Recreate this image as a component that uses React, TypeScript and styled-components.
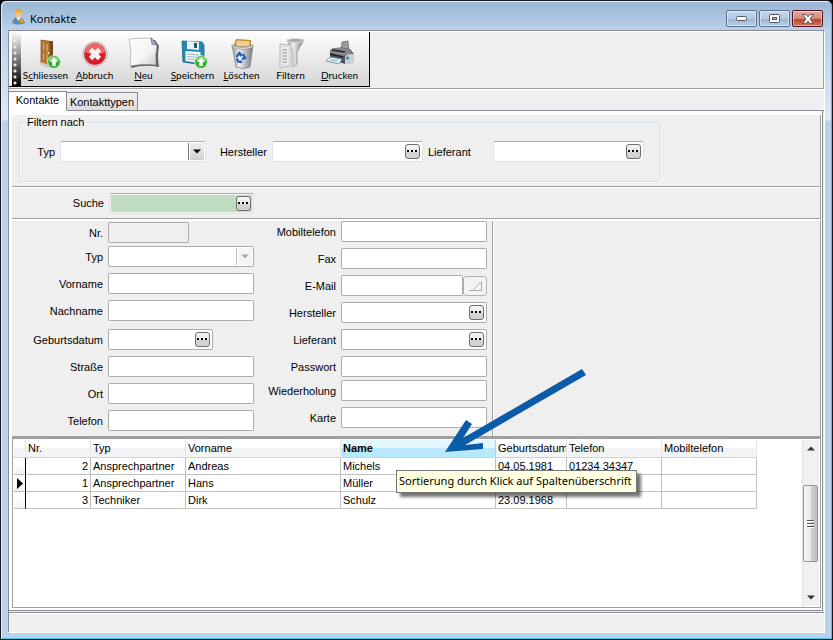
import React from "react";
import styled, { createGlobalStyle, css } from "styled-components";

const Global = createGlobalStyle`
  *, *::before, *::after { box-sizing: border-box; }
  body { margin: 0; background: #000; font: 11px/14px "Liberation Sans", Arial, sans-serif; color: #000; }
  input, select, button { font: inherit; color: inherit; margin: 0; padding: 0; border-radius: 0; outline: none; }
`;

const line = "#a0a0a0";
const face = "#efefef";
const ui = `"Noto Sans", "Open Sans", sans-serif`;

const Window = styled.div`
  position: relative;
  display: flex;
  flex-direction: column;
  min-height: 100vh;
  padding: 1px 7px 6px 7px;
  border: 1px solid #16161c;
  border-bottom-color: #000;
  border-radius: 6px 6px 0 0;
  background: linear-gradient(#9ab4d2 0, #b9d1ea 29px, #dfe9f6 119px, #b9d1ea 120px);
  box-shadow: inset 1px 1px 0 #e6eff8, inset -1px -1px 0 #2fd0e8;
`;

const TitleBar = styled.header`
  display: flex;
  align-items: center;
  height: 28px;
  padding: 0 2px 0 4px;
  gap: 5px;
`;

const Title = styled.h1`
  flex: 1;
  margin: 0;
  padding-top: 5px;
  font: 400 11px/16px ${ui};
`;

const Captions = styled.div`
  display: flex;
  gap: 2px;
  padding-top: 5px;
`;

const CaptionButton = styled.button<{ $danger?: boolean }>`
  display: grid;
  place-items: center;
  width: 31px;
  height: 17px;
  border: 1px solid ${(p) => (p.$danger ? "#4c1420" : "#5c7291")};
  border-radius: 2px;
  background: ${(p) =>
    p.$danger
      ? "linear-gradient(#e5aa9f 0, #d68677 50%, #b8402a 51%, #d0735f 100%)"
      : "linear-gradient(#c5d7ea 0, #b4c9e0 50%, #98b3d0 51%, #b9d0e8 100%)"};
  box-shadow: inset 0 0 0 1px rgba(255, 255, 255, 0.45);
`;

const Client = styled.div`
  flex: 1;
  display: flex;
  flex-direction: column;
  border: 1px solid #8b8b96;
  border-right-color: #fff;
  border-bottom-color: #fff;
  background: ${face};
`;

const ToolArea = styled.div`
  display: flex;
  height: 58px;
  padding-top: 1px;
  border-right: 1px solid ${line};
  border-bottom: 1px solid ${line};
  box-shadow: inset 0 1px 0 #fff, 0 1px 0 #fff;
`;

const Toolbar = styled.div`
  display: flex;
  height: 55px;
  border-right: 1px solid #000;
  border-bottom: 1px solid #000;
  background: linear-gradient(#fefefe, #d6d6d6);
  padding-right: 5px;
`;

const Grip = styled.div`
  width: 12px;
  border-left: 3px solid #f8f8f8;
  background:
    radial-gradient(circle at 3px 3px, #e8e8e8 1px, transparent 2px) 0 0 / 9px 6px repeat-y,
    linear-gradient(#fff, #888 45%, #000);
`;

const ToolButton = styled.button`
  display: flex;
  flex-direction: column;
  align-items: center;
  width: 49px;
  padding-top: 5px;
  border: 0;
  background: none;
  font: 10px/13px Lato, sans-serif;
  white-space: nowrap;
  svg { display: block; }
`;

const Tabs = styled.div`
  display: flex;
  align-items: flex-end;
  height: 22px;
  padding-top: 2px;
  box-shadow: inset 0 -1px 0 #8b8b96;
`;

const Tab = styled.button<{ $active?: boolean }>`
  height: ${(p) => (p.$active ? 20 : 19)}px;
  width: ${(p) => (p.$active ? 58 : 71)}px;
  padding-bottom: ${(p) => (p.$active ? 2 : 0)}px;
  border: 1px solid #8b8b96;
  border-bottom-color: ${(p) => (p.$active ? "#fff" : "#8b8b96")};
  border-left: 0;
  background: ${(p) => (p.$active ? "#fff" : "linear-gradient(#f2f2f2, #dcdcdc)")};
  font: 11px/14px "Liberation Sans", Arial, sans-serif;
`;

const Page = styled.div`
  flex: 1;
  display: flex;
  flex-direction: column;
  margin-right: 1px;
  padding: 4px 1px 2px 3px;
  border-right: 1px solid #8b8b96;
  border-bottom: 1px solid #8b8b96;
  background: #fff;
`;

const Section = styled.section`
  border-right: 1px solid ${line};
  border-bottom: 1px solid ${line};
  background: ${face};
`;

const FilterSection = styled(Section)`
  padding: 0 7px 4px;
`;

const FilterBox = styled.fieldset`
  display: flex;
  align-items: center;
  width: 642px;
  max-width: 100%;
  height: 67px;
  margin: 0;
  padding: 0 0 7px 17px;
  border: 1px solid #d3dfea;
  border-radius: 3px;
  box-shadow: inset 1px 0 0 #fff, 1px 1px 0 #fff;
  legend { margin-left: -12px; padding: 0 2px; }
`;

const SearchSection = styled(Section)`
  display: flex;
  align-items: center;
  gap: 5px;
  height: 32px;
  padding-left: 1px;
  border-top: 1px solid #fff;
`;

const FormSection = styled(Section)`
  display: flex;
  border-top: 2px solid #fff;
  border-bottom: 3px solid ${line};
`;

const Column = styled.div<{ $width: number; $top: number }>`
  width: ${(p) => p.$width}px;
  padding: ${(p) => p.$top}px 0 5px;
`;

const Detail = styled.div`
  flex: 1;
  border-left: 1px solid ${line};
  box-shadow: inset 1px 0 0 #fff;
`;

const Row = styled.div<{ $gap?: number }>`
  display: flex;
  align-items: center;
  gap: 5px;
  margin-top: ${(p) => p.$gap ?? 6}px;
`;

const Label = styled.label<{ $width: number; $align?: "left" | "right" }>`
  width: ${(p) => p.$width}px;
  text-align: ${(p) => p.$align ?? "right"};
  white-space: nowrap;
`;

type BoxProps = { $width: number; $soft?: boolean; $tone?: string };

const frame = css<BoxProps>`
  width: ${(p) => p.$width}px;
  height: 21px;
  border: 1px solid ${(p) => (p.$soft ? "#e2e3ea" : "#adadad")};
  border-top-color: #abadb3;
  border-radius: 2px;
  background: ${(p) => p.$tone ?? "#fff"};
`;

const TextBox = styled.input<BoxProps>`
  ${frame}
  padding: 0 3px;
`;

const FieldBox = styled.div<BoxProps>`
  ${frame}
  position: relative;
  display: flex;
  align-items: center;
  padding-right: 2px;
  ${(p) => p.$tone && "box-shadow: inset 0 0 0 1px #f4f4f4;"}
  input { flex: 1; min-width: 0; height: 17px; border: 0; background: transparent; padding: 0 3px; }
  select { width: 100%; height: 19px; border: 0; background: transparent; appearance: none; padding: 0 20px 0 3px; opacity: 1; }
`;

const DropMark = styled.span<{ $muted?: boolean }>`
  position: absolute;
  top: 1px;
  right: 1px;
  display: grid;
  place-items: center;
  width: 16px;
  height: 17px;
  border-left: 1px solid ${(p) => (p.$muted ? "#b8b8b8" : "#777")};
  background: ${(p) => (p.$muted ? "#f4f4f4" : "linear-gradient(#f0f0f0, #cfcfcf)")};
  box-shadow: inset 1px 0 0 #fff;
  pointer-events: none;
`;

const DotsButton = styled.button`
  display: grid;
  place-items: center;
  width: 15px;
  height: 15px;
  border: 1px solid #6f6f6f;
  border-radius: 3px;
  background: linear-gradient(#f3f3f3 0, #ebebeb 50%, #d6d6d6 51%, #d0d0d0);
`;

const MailButton = styled.button`
  display: grid;
  place-items: center;
  width: 24px;
  height: 20px;
  border: 1px solid #adb2b5;
  border-radius: 3px;
  background: #f3f3f3;
`;

const Joined = styled.div`
  display: flex;
  align-items: center;
  height: 21px;
`;

const GridPane = styled.section`
  flex: 1;
  display: flex;
  border: 1px solid ${line};
  border-top: 0;
  padding: 1px 0 1px 1px;
  background: #fff;
`;

const TableArea = styled.div`
  flex: 1;
`;

const Table = styled.table`
  border-collapse: separate;
  border-spacing: 0;
  table-layout: fixed;
  width: 743px;
  th, td { height: 17px; padding: 0 2px; overflow: hidden; white-space: nowrap; line-height: 15px; }
  th {
    height: 18px;
    padding-right: 0;
    text-align: left;
    font-weight: 400;
    border-right: 1px solid #e3e6ea;
    border-bottom: 1px solid #d0d3d6;
    background: linear-gradient(#fff 45%, #f2f3f5 50%, #f4f5f7);
  }
  td { border-right: 1px solid #c0c0c0; border-bottom: 1px solid #c0c0c0; }
  td:first-child { border-right-color: #000; background: linear-gradient(#fff 40%, #f0f1f3); padding: 0 0 0 3px; }
  td:first-child svg { display: block; }
  td:nth-child(2) { text-align: right; }
  th[aria-sort] {
    font-weight: 700;
    border-right-color: #96d9f9;
    background: linear-gradient(#e3f7ff 45%, #bde9fc 50%, #b5e7fd);
  }
`;

const Scrollbar = styled.div`
  display: flex;
  flex-direction: column;
  width: 17px;
  margin-right: 1px;
  border-left: 1px solid #e3e3e3;
  background: #f0f0f0;
`;

const ScrollButton = styled.button`
  display: grid;
  place-items: center;
  height: 17px;
  border: 0;
  background: none;
`;

const Track = styled.div`
  flex: 1;
  padding-top: 28px;
`;

const Thumb = styled.div`
  display: grid;
  place-items: center;
  height: 77px;
  width: 15px;
  border: 1px solid #979797;
  border-radius: 2px;
  background: linear-gradient(90deg, #f5f5f5 0, #e9e9eb 50%, #cfcfd1 51%, #c0c0c4);
`;

const StatusBar = styled.footer`
  height: 20px;
  margin-top: 1px;
  border-top: 1px solid #8b8b96;
  box-shadow: inset 0 1px 0 #fff;
  background: ${face};
`;

const Tooltip = styled.div`
  position: absolute;
  left: 395px;
  top: 469px;
  padding: 2px 4px 3px 2px;
  border: 1px solid #767676;
  background: #ffffe1;
  box-shadow: 4px 4px 3px rgba(0, 0, 0, 0.55);
  font: 11px/16px ${ui};
  white-space: nowrap;
`;

const Pointer = styled.svg`
  position: absolute;
  left: 439px;
  top: 364px;
  pointer-events: none;
`;

const Triangle = ({ up, color = "#000" }: { up?: boolean; color?: string }) => (
  <svg width="8" height="5" viewBox="0 0 8 5" aria-hidden="true">
    <path d={up ? "M0 4.5L4 0.5L8 4.5Z" : "M0 0.5H8L4 4.5Z"} fill={color} />
  </svg>
);

const Dots = ({ label }: { label: string }) => (
  <DotsButton type="button" aria-label={label}>
    <svg width="11" height="3" viewBox="0 0 11 3" shapeRendering="crispEdges" aria-hidden="true">
      <path d="M0 0h2v2H0zM4 0h2v2H4zM8 0h2v2H8z" />
    </svg>
  </DotsButton>
);

const GreenArrow = () => (
  <g>
    <circle cx="24" cy="25" r="6.4" fill="#34ad38" stroke="#e5f5e2" strokeWidth="0.8" />
    <path d="M18.5 23a6 6 0 0 1 11 0q-5 3-11 0z" fill="#83d978" />
    <path d="M24 20.4l-4 4.4h2.3v4.2h3.4v-4.2H28z" fill="#fff" />
  </g>
);

const icons: Record<string, React.ReactNode> = {
  door: (
    <>
      <path d="M11 3l12 1v22l-5 2h-7z" fill="#b9813d" />
      <path d="M20 4l3 .5V25l-3 2z" fill="#7a4a1d" />
      <path d="M11 3l9 2v25L11 26z" fill="#b97b35" stroke="#7c4b1c" strokeWidth=".7" />
      <path d="M12.500 5.500l2.300.5v7.500l-2.300-.5zM16 6.500l2.300.5v7.500L16 14zM12.500 16l2.300.6V24l-2.300-.9zM16 17l2.300.6V26L16 25z" fill="#dba861" stroke="#8b5825" strokeWidth=".5" />
      <circle cx="18.500" cy="16" r="1" fill="#fff1a8" />
      <path d="M9 27l9 4 3-2-2-1-8-3z" fill="#c9ccd0" />
      <GreenArrow />
    </>
  ),
  cancel: (
    <>
      <circle cx="16" cy="17" r="12.3" fill="#e8e8e8" stroke="#a8a8a8" strokeWidth=".8" />
      <circle cx="16" cy="17" r="10.8" fill="#d51e25" />
      <path d="M5.500 15a10.600 10.600 0 0 1 21 0q-9 5-21 0z" fill="#ea6a69" />
      <path d="M11.500 12.500l9 9M20.500 12.500l-9 9" stroke="#f4f4f4" strokeWidth="4.600" />
    </>
  ),
  page: (
    <>
      <path d="M4 3L27 3 31 9Q29 20 31 30Q17 27 3 31Q6 15 4 3z" fill="#444" opacity=".85" />
      <path d="M1 2Q13 1 24 1L29 8Q27 18 28 28Q15 26 2 29Q4 14 1 2z" fill="url(#paper)" stroke="#999" strokeWidth=".6" />
      <path d="M23 1l1 6 5 1z" fill="#b5b4e8" stroke="#55557c" strokeWidth=".7" />
    </>
  ),
  disk: (
    <>
      <path d="M5 4l20 1 2 3v20L6 25z" fill="#2389b4" stroke="#17658b" strokeWidth=".8" />
      <path d="M10 4l12 1v8l-12-1z" fill="#e6f0f5" />
      <path d="M17 6h3v5h-3z" fill="#185c7b" />
      <path d="M8.5 14l15 1v11l-15-2z" fill="#f6f8fa" />
      <path d="M10 17l12 1M10 19.5l11 1M10 22l8 .8" stroke="#a4afb9" />
      <GreenArrow />
    </>
  ),
  bin: (
    <>
      <path d="M8 8l2-6 15 1v8H8z" fill="#c88938" />
      <path d="M10 3l14 .8v8l-14-1z" fill="#f0cf8e" stroke="#b77825" strokeWidth=".6" />
      <path d="M6 8q10 4 21 0l-3 22q-7 3-14 0z" fill="url(#metal)" stroke="#77797c" strokeWidth=".7" />
      <path d="M6 8q10 5 21 0v2q-10 5-21 0z" fill="#dedede" stroke="#8c8c8c" strokeWidth=".6" />
      <path d="M10.5 20l3-4 2 3M17 17l2 4-3 1M16 25l-4-.5-1-3" fill="none" stroke="#1f5cc5" strokeWidth="2.3" />
    </>
  ),
  filter: (
    <>
      <path d="M12 3q8-3 17 0l-7 12v12l-4 3V15z" fill="url(#metal)" stroke="#8b8e90" strokeWidth=".7" />
      <ellipse cx="20.500" cy="3.500" rx="8" ry="2" fill="#a3a7aa" stroke="#e4e4e4" />
      <path d="M5 7l11 1v21l-11 2z" fill="#edf0f2" stroke="#a4a8ab" strokeWidth=".8" />
      <path d="M7 9l7 .6v18L7 29z" fill="none" stroke="#c6c9cc" strokeWidth=".7" />
      <path d="M9 12v14M11 12v14" stroke="#999" strokeWidth="1.200" strokeDasharray="2 1" />
    </>
  ),
  printer: (
    <>
      <path d="M18 5l6-1 1 11h-8z" fill="#999ea2" stroke="#5b5f62" strokeWidth=".7" />
      <path d="M7 12q9-3 19 0l4 5v7q-2 3-9 3L6 22V15z" fill="#4e5255" />
      <path d="M7 12q9-2 18 0l3 4-8 3-14-3z" fill="#85898c" />
      <path d="M21 19q4-3 9-2v7q-3 4-9 3z" fill="#c9ced3" />
      <circle cx="23.500" cy="21" r="1.500" fill="#2f78c8" />
      <path d="M8 13l13 2M6 17l13 3" stroke="#202325" strokeWidth="1.500" />
      <path d="M6 20l12 2-3 5-13-3z" fill="#e8f3fa" stroke="#6c7b84" strokeWidth=".8" />
      <path d="M7 21.500l8 1.200-2 2.600-8-1.500z" fill="#a7d8ea" />
    </>
  ),
};

const tools: { icon: string; text: React.ReactNode }[] = [
  { icon: "door", text: <>S<u>c</u>hliessen</> },
  { icon: "cancel", text: <><u>A</u>bbruch</> },
  { icon: "page", text: <><u>N</u>eu</> },
  { icon: "disk", text: <><u>S</u>peichern</> },
  { icon: "bin", text: <><u>L</u>öschen</> },
  { icon: "filter", text: "Filtern" },
  { icon: "printer", text: <><u>D</u>rucken</> },
];

type Field = { id: string; text: string; gap?: number; width?: number; kind?: "picker" | "select" | "readonly" | "mail" | "password" };

const leftFields: Field[] = [
  { id: "nr", text: "Nr.", gap: 0, width: 81, kind: "readonly" },
  { id: "typ", text: "Typ", gap: 3, kind: "select" },
  { id: "vorname", text: "Vorname" },
  { id: "nachname", text: "Nachname" },
  { id: "geburtsdatum", text: "Geburtsdatum", gap: 8, width: 105, kind: "picker" },
  { id: "strasse", text: "Straße" },
  { id: "ort", text: "Ort" },
  { id: "telefon", text: "Telefon" },
];

const rightFields: Field[] = [
  { id: "mobil", text: "Mobiltelefon", gap: 0 },
  { id: "fax", text: "Fax" },
  { id: "mail", text: "E-Mail", kind: "mail" },
  { id: "hersteller", text: "Hersteller", kind: "picker" },
  { id: "lieferant", text: "Lieferant", kind: "picker" },
  { id: "passwort", text: "Passwort", kind: "password" },
  { id: "wiederholung", text: "Wiederholung", gap: 3, kind: "password" },
  { id: "karte", text: "Karte" },
];

const Picker = ({ id, label, ...box }: { id: string; label: string } & BoxProps) => (
  <FieldBox {...box}>
    <input id={id} type="text" />
    <Dots label={`${label} auswählen`} />
  </FieldBox>
);

const Control = ({ f }: { f: Field }) => {
  const width = f.width ?? 146;
  switch (f.kind) {
    case "picker":
      return <Picker id={f.id} label={f.text} $width={width} />;
    case "select":
      return (
        <FieldBox $width={width}>
          <select id={f.id} disabled />
          <DropMark $muted><Triangle color="#aaa" /></DropMark>
        </FieldBox>
      );
    case "readonly":
      return <TextBox id={f.id} readOnly $width={width} $tone={face} />;
    case "mail":
      return (
        <Joined>
          <TextBox id={f.id} type="email" $width={122} />
          <MailButton type="button" aria-label="E-Mail senden">
            <svg width="16" height="12" viewBox="0 0 16 12" fill="none" aria-hidden="true">
              <path d="M2 10.500H14.500V2" stroke="#aaa" />
              <path d="M7 9L14 2" stroke="#999" strokeDasharray="2 1" />
            </svg>
          </MailButton>
        </Joined>
      );
    default:
      return <TextBox id={f.id} type={f.kind === "password" ? "password" : "text"} $width={width} />;
  }
};

const Fields = ({ list, labelWidth }: { list: Field[]; labelWidth: number }) => (
  <>
    {list.map((f) => (
      <Row key={f.id} $gap={f.gap}>
        <Label htmlFor={f.id} $width={labelWidth}>{f.text}</Label>
        <Control f={f} />
      </Row>
    ))}
  </>
);

const columns = [
  { text: "", width: 12 },
  { text: "Nr.", width: 65 },
  { text: "Typ", width: 95 },
  { text: "Vorname", width: 155 },
  { text: "Name", width: 155 },
  { text: "Geburtsdatum", width: 71 },
  { text: "Telefon", width: 95 },
  { text: "Mobiltelefon", width: 95 },
];

const rows = [
  ["2", "Ansprechpartner", "Andreas", "Michels", "04.05.1981", "01234 34347", ""],
  ["1", "Ansprechpartner", "Hans", "Müller", "", "", ""],
  ["3", "Techniker", "Dirk", "Schulz", "23.09.1968", "", ""],
];

export default function App() {
  return (
    <Window>
      <Global />
      <TitleBar>
        <svg width="13" height="17" viewBox="0 0 13 17" aria-hidden="true">
          <path d="M0 15q1-6 6-6t7 6q-6 3-13 0z" fill="#5b8fb8" />
          <path d="M4 9l2.500 4L9 9z" fill="#e8f0f6" />
          <circle cx="6.500" cy="6" r="3.400" fill="#f0c18d" />
          <path d="M2.500 5q0-4 4-4t4 4q-4-1.500-8 0z" fill="#f0a81c" />
          <path d="M8 11h3v4H8z" fill="#d6a034" />
        </svg>
        <Title>Kontakte</Title>
        <Captions>
          <CaptionButton type="button" aria-label="Minimieren">
            <svg width="11" height="5" viewBox="0 0 11 5" aria-hidden="true">
              <rect x=".5" y=".5" width="10" height="4" rx="1" fill="#fff" stroke="#535666" />
            </svg>
          </CaptionButton>
          <CaptionButton type="button" aria-label="Maximieren">
            <svg width="11" height="9" viewBox="0 0 11 9" aria-hidden="true">
              <rect x=".5" y=".5" width="10" height="8" rx="1" fill="#fff" stroke="#535666" />
              <rect x="3.500" y="3.500" width="4" height="2" fill="#a9bdd5" stroke="#535666" />
            </svg>
          </CaptionButton>
          <CaptionButton type="button" aria-label="Fenster schließen" $danger>
            <svg width="12" height="10" viewBox="0 0 12 10" aria-hidden="true">
              <path d="M.5.5h3.300L6 2.800 8.200.5h3.300L8 5l3.500 4.500H8.200L6 7.200 3.800 9.500H.5L4 5z" fill="#fff" stroke="#535666" />
            </svg>
          </CaptionButton>
        </Captions>
      </TitleBar>

      <Client>
        <ToolArea>
          <Toolbar role="toolbar">
            <Grip />
            {tools.map((t) => (
              <ToolButton key={t.icon} type="button">
                <svg width="32" height="32" viewBox="0 0 32 32" aria-hidden="true">
                  <defs>
                    <linearGradient id="paper" x2="1" y2="1">
                      <stop stopColor="#fff" />
                      <stop offset=".6" stopColor="#f4f4f4" />
                      <stop offset="1" stopColor="#c8c8c8" />
                    </linearGradient>
                    <linearGradient id="metal">
                      <stop stopColor="#8f9294" />
                      <stop offset=".35" stopColor="#f2f2f2" />
                      <stop offset="1" stopColor="#77797b" />
                    </linearGradient>
                  </defs>
                  {icons[t.icon]}
                </svg>
                <span>{t.text}</span>
              </ToolButton>
            ))}
          </Toolbar>
        </ToolArea>

        <Tabs role="tablist">
          <Tab type="button" role="tab" aria-selected="true" $active>Kontakte</Tab>
          <Tab type="button" role="tab" aria-selected="false">Kontakttypen</Tab>
        </Tabs>

        <Page role="tabpanel">
          <FilterSection>
            <FilterBox>
              <legend>Filtern nach</legend>
              <Row $gap={0}>
                <Label htmlFor="f-typ" $width={18}>Typ</Label>
                <FieldBox $width={146} $soft>
                  <select id="f-typ" />
                  <DropMark><Triangle /></DropMark>
                </FieldBox>
                <Label htmlFor="f-hersteller" $width={56}>Hersteller</Label>
                <Picker id="f-hersteller" label="Hersteller" $width={151} $soft />
                <Label htmlFor="f-lieferant" $width={60} $align="left">Lieferant</Label>
                <Picker id="f-lieferant" label="Lieferant" $width={151} $soft />
              </Row>
            </FilterBox>
          </FilterSection>

          <SearchSection>
            <Label htmlFor="suche" $width={91}>Suche</Label>
            <Picker id="suche" label="Suche" $width={145} $soft $tone="#c0dcc0" />
          </SearchSection>

          <FormSection>
            <Column $width={242} $top={1}>
              <Fields list={leftFields} labelWidth={91} />
            </Column>
            <Column $width={238} $top={0}>
              <Fields list={rightFields} labelWidth={82} />
            </Column>
            <Detail />
          </FormSection>

          <GridPane>
            <TableArea>
              <Table>
                <colgroup>
                  {columns.map((c) => (
                    <col key={c.text} width={c.width} />
                  ))}
                </colgroup>
                <thead>
                  <tr>
                    {columns.map((c) => (
                      <th key={c.text} scope="col" aria-sort={c.text === "Name" ? "ascending" : undefined}>{c.text}</th>
                    ))}
                  </tr>
                </thead>
                <tbody>
                  {rows.map((r) => (
                    <tr key={r[0]}>
                      <td>
                        {r[0] === "1" && (
                          <svg width="7" height="11" viewBox="0 0 7 11" aria-hidden="true">
                            <path d="M0 0L6 5.500L0 11Z" />
                          </svg>
                        )}
                      </td>
                      {r.map((v, i) => (
                        <td key={i}>{v}</td>
                      ))}
                    </tr>
                  ))}
                </tbody>
              </Table>
            </TableArea>
            <Scrollbar>
              <ScrollButton type="button" aria-label="Nach oben"><Triangle up color="#333" /></ScrollButton>
              <Track>
                <Thumb>
                  <svg width="8" height="8" viewBox="0 0 8 8" shapeRendering="crispEdges" aria-hidden="true">
                    <path d="M0 0h7v1H0zM0 3h7v1H0zM0 6h7v1H0z" fill="#555" />
                    <path d="M0 1h7v1H0zM0 4h7v1H0zM0 7h7v1H0z" fill="#fff" />
                  </svg>
                </Thumb>
              </Track>
              <ScrollButton type="button" aria-label="Nach unten"><Triangle color="#333" /></ScrollButton>
            </Scrollbar>
          </GridPane>
        </Page>
        <StatusBar />
      </Client>

      <Tooltip role="tooltip">Sortierung durch Klick auf Spaltenüberschrift</Tooltip>
      <Pointer width="150" height="95" viewBox="440 365 150 95" aria-hidden="true">
        <path d="M445 452L466 420L472 424L463 438L582 369L586 375L465 445L483 443V449Z" fill="#0a5ca8" />
      </Pointer>
    </Window>
  );
}
